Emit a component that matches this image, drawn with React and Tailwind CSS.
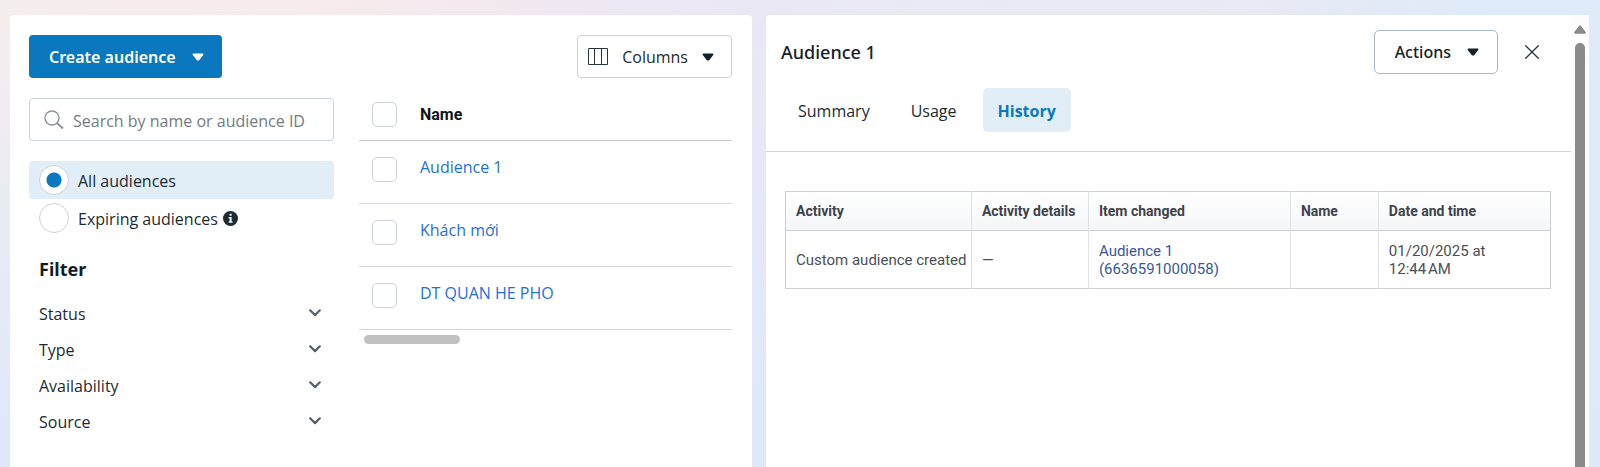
import React from 'react';

const filters = ['Status', 'Type', 'Availability', 'Source'];
const audiences = ['Audience 1', 'Khách mới', 'DT QUAN HE PHO'];

function Caret({ className = '' }) {
  return (
    <svg viewBox="0 0 12 8" className={`h-2 w-3 ${className}`} fill="currentColor" aria-hidden="true">
      <path d="M1.4 0.5h9.200c0.8 0 1.100 0.9 0.6 1.5L7.400 7c-0.7 0.8-2.100 0.8-2.800 0L0.8 2C0.300 1.400 0.6 0.5 1.400 0.5z" />
    </svg>
  );
}

function Chevron() {
  return (
    <svg viewBox="0 0 12 8" className="mb-0.5 h-2 w-3" fill="none" stroke="#56616b" strokeWidth="2.2" strokeLinecap="round" strokeLinejoin="round" aria-hidden="true">
      <path d="M1.2 1.3L6 6.1l4.8-4.8" />
    </svg>
  );
}

function Check({ label }) {
  return (
    <input
      type="checkbox"
      aria-label={label}
      className="block size-[25px] appearance-none rounded-[5px] border border-[#cdd2d8] bg-white checked:bg-[#0a78be]"
    />
  );
}

function Choice({ id, label, defaultChecked, children }) {
  return (
    <div className={`flex h-[38px] items-center gap-[9px] rounded pl-2.5 ${defaultChecked ? 'bg-[#e1edf7]' : ''}`}>
      <input
        type="radio"
        name="scope"
        id={id}
        defaultChecked={defaultChecked}
        className="size-[30px] shrink-0 appearance-none rounded-full border border-[#cbd2d9] bg-white checked:bg-[radial-gradient(circle,#0a78be_7px,white_8px)]"
      />
      <label htmlFor={id} className="pt-0.5">{label}</label>
      {children}
    </div>
  );
}

function Sidebar() {
  return (
    <div className="w-[305px] shrink-0">
      <button className="flex h-[43px] items-center rounded bg-[#0a78be] pr-[18px] pl-5 font-['Noto_Sans',sans-serif] text-base font-semibold whitespace-nowrap text-white">
        Create audience
        <Caret className="ml-4" />
      </button>

      <label className="mt-5 flex h-[43px] items-center gap-[9px] rounded border border-[#cbd2d9] px-3.5">
        <svg viewBox="0 0 20 20" className="size-5 shrink-0" fill="none" stroke="#8b9299" aria-hidden="true">
          <circle cx="8" cy="8" r="7" strokeWidth="1.3" />
          <path d="M13 13l6 5.500" strokeWidth="1.8" />
        </svg>
        <input
          type="text"
          aria-label="Search by name or audience ID"
          placeholder="Search by name or audience ID"
          className="min-w-0 flex-1 bg-transparent pt-0.5 outline-none placeholder:text-[#737b83]"
        />
      </label>

      <div className="mt-5">
        <Choice id="all" label="All audiences" defaultChecked />
        <Choice id="expiring" label="Expiring audiences">
          <svg viewBox="0 0 15 15" className="-ml-1 size-[15px]" role="img" aria-label="Information">
            <circle cx="7.5" cy="7.5" r="7.5" fill="#1c2b33" />
            <path d="M6.6 2.8h2v1.9h-2zM5.6 5.9h3v4.5h1v1.3h-4v-1.3h1V7.2h-1z" fill="white" />
          </svg>
        </Choice>
      </div>

      <div className="px-2.5">
        <h2 className="mt-[19px] font-['Noto_Sans',sans-serif] text-lg leading-[26px] font-bold text-[#101c25]">Filter</h2>
        <div className="mt-3.5">
          {filters.map((f) => (
            <button key={f} className="flex h-9 w-full items-center justify-between pr-[3px]">
              {f}
              <Chevron />
            </button>
          ))}
        </div>
      </div>
    </div>
  );
}

function AudienceList() {
  return (
    <div className="min-w-0 flex-1">
      <div className="flex justify-end">
        <button className="flex h-[43px] items-center rounded border border-[#cbd2d9] pr-[17px] pl-2.5">
          <svg viewBox="0 0 20 17" className="mr-3.5 h-[17px] w-5" fill="none" stroke="#26343d" strokeWidth="1" aria-hidden="true">
            <path d="M0.5 0.5h19v16h-19zM6.5 0.5v16M13.5 0.5v16" />
          </svg>
          Columns
          <Caret className="ml-3.5 text-[#14222b]" />
        </button>
      </div>
      <table className="mt-2 w-full border-collapse">
        <thead>
          <tr className="h-[54px] border-b border-[#c6cace] text-left">
            <th className="w-[61px] pt-1 pl-[13px]"><Check label="Select all audiences" /></th>
            <th className="pt-1 font-['Roboto',sans-serif] text-base font-bold text-[#101419]">Name</th>
          </tr>
        </thead>
        <tbody>
          {audiences.map((a) => (
            <tr key={a} className="h-[63px] border-b border-[#d4d8dc]">
              <td className="pt-4 pl-[13px] align-top"><Check label={`Select ${a}`} /></td>
              <td className="pt-3.5 align-top"><a href="#" className="text-[#1f6fdc]">{a}</a></td>
            </tr>
          ))}
        </tbody>
      </table>
      <div className="mt-[5px] ml-[5px] h-[9px] w-24 rounded-full bg-[#c1c1c1]" />
    </div>
  );
}

function HistoryTable() {
  const line = 'border-r border-[#dfe1e3] px-2.5';
  return (
    <table className="w-full table-fixed border-collapse border border-[#cdcfd1] text-left font-['Roboto',sans-serif] text-[15px] leading-[18px] text-[#4b4f56]">
      <colgroup>
        <col className="w-[24.3%]" />
        <col className="w-[15.3%]" />
        <col className="w-[26.4%]" />
        <col className="w-[11.5%]" />
        <col />
      </colgroup>
      <thead>
        <tr className="h-[39px] border-b border-[#c9d0d6] bg-linear-to-b from-white to-[#f4f6f7] text-sm text-[#3f434b]">
          <th className={line}>Activity</th>
          <th className={`${line} whitespace-nowrap`}>Activity details</th>
          <th className={line}>Item changed</th>
          <th className={line}>Name</th>
          <th className="px-2.5">Date and time</th>
        </tr>
      </thead>
      <tbody>
        <tr className="h-[58px]">
          <td className={`${line} whitespace-nowrap`}>Custom audience created</td>
          <td className={line}>—</td>
          <td className={line}><a href="#" className="text-[#365899]">Audience 1<br />(6636591000058)</a></td>
          <td className={line} />
          <td className="px-2.5">01/20/2025 at<br />12:44{'\u202f'}AM</td>
        </tr>
      </tbody>
    </table>
  );
}

function Details() {
  return (
    <section className="flex rounded-tl bg-white">
      <div className="min-w-0 flex-1">
        <header className="border-b border-[#cbd6de] pb-[19px]">
          <div className="flex items-center justify-between pt-[15px] pr-8 pl-[15px]">
            <h1 className="font-['Noto_Sans',sans-serif] text-lg font-medium text-[#14222b]">Audience 1</h1>
            <div className="flex items-center gap-[27px]">
              <button className="flex h-11 items-center rounded-[5px] border border-[#a9b7c9] pr-[18px] pl-5 font-['Noto_Sans',sans-serif] font-medium text-[#14222b]">
                Actions
                <Caret className="ml-4" />
              </button>
              <button aria-label="Close">
                <svg viewBox="0 0 14 14" className="size-3.5" stroke="#26343d" strokeWidth="1.3" strokeLinecap="round" aria-hidden="true">
                  <path d="M0.7 0.7l12.6 12.6M13.3 0.7L0.7 13.3" />
                </svg>
              </button>
            </div>
          </div>
          <nav className="mt-3.5 flex gap-[11px] pl-[17px]">
            <button className="h-11 rounded-[5px] px-[15px] pt-0.5">Summary</button>
            <button className="h-11 rounded-[5px] px-[15px] pt-0.5">Usage</button>
            <button className="h-11 rounded-[5px] bg-[#e1edf7] px-[15px] pt-0.5 font-bold text-[#0a78be]">History</button>
          </nav>
        </header>
        <div className="pt-[39px] pr-5 pl-[19px]">
          <HistoryTable />
        </div>
      </div>
      <div className="flex w-[18px] flex-col items-center bg-[#fcfcfc] pt-2.5">
        <svg viewBox="0 0 12 9" className="h-[9px] w-3" fill="#8a8a8a" aria-hidden="true">
          <path d="M4.9 0.9c0.5-0.8 1.7-0.8 2.2 0L11.6 7c0.5 0.8 0.1 1.7-0.8 1.7H1.2C0.3 8.7 0 7.8 0.4 7z" />
        </svg>
        <div className="mt-[9px] w-2.5 flex-1 rounded-t-full bg-[#8a8a8a]" />
      </div>
    </section>
  );
}

export default function App() {
  return (
    <main className="grid min-h-screen grid-cols-[742fr_823fr] gap-3.5 bg-[linear-gradient(to_bottom,transparent,#dfe8f8_90%),linear-gradient(to_right,#f5eeee_0%,#f8ebeb_20%,#f2e8f1_32%,#ebe7f5_46%,#e8eaf3_62%,#e9e9f3_76%,#deebf9_94%)] pt-[15px] pr-[11px] pl-2.5 font-['Open_Sans',sans-serif] text-base text-[#1c2b33]">
      <section className="flex gap-[25px] rounded-t bg-white pt-5 pr-5 pl-[19px]">
        <Sidebar />
        <AudienceList />
      </section>
      <Details />
    </main>
  );
}
